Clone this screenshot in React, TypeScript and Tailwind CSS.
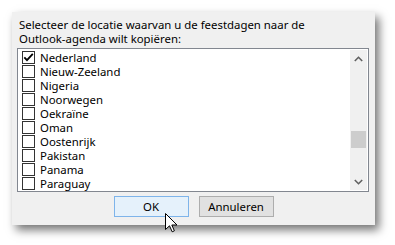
import React from "react"

const countries = [
  { name: "Nederland", checked: true },
  { name: "Nieuw-Zeeland" },
  { name: "Nigeria" },
  { name: "Noorwegen" },
  { name: "Oekraïne" },
  { name: "Oman" },
  { name: "Oostenrijk" },
  { name: "Pakistan" },
  { name: "Panama" },
  { name: "Paraguay" },
]

function CheckRow({ name, checked }: { name: string; checked?: boolean }) {
  return (
    <div className="flex h-[14px] items-center pl-[3px]">
      <div className="flex h-[13px] w-[13px] shrink-0 items-center justify-center border border-[#333333] bg-white">
        {checked && (
          <svg width="11" height="11" viewBox="0 0 11 11">
            <path d="M1.3 5.3 L4 8.2 L9.8 1.8" fill="none" stroke="#000" strokeWidth="1.8" />
          </svg>
        )}
      </div>
      <span className="ml-[5px] leading-[13px]">{name}</span>
    </div>
  )
}

function Scrollbar() {
  return (
    <div className="flex w-[17px] flex-col bg-[#f0f0f0]">
      <div className="flex h-[17px] items-center justify-center">
        <svg width="9" height="6" viewBox="0 0 9 6">
          <path d="M0.8 5 L4.5 1.3 L8.2 5" fill="none" stroke="#606060" strokeWidth="1.6" />
        </svg>
      </div>
      <div className="h-[64px]" />
      <div className="mx-px h-[17px] bg-[#cdcdcd]" />
      <div className="flex-1" />
      <div className="flex h-[17px] items-center justify-center">
        <svg width="9" height="6" viewBox="0 0 9 6">
          <path d="M0.8 1 L4.5 4.7 L8.2 1" fill="none" stroke="#606060" strokeWidth="1.6" />
        </svg>
      </div>
    </div>
  )
}

function Cursor() {
  return (
    <svg className="absolute left-[165px] top-[213px]" width="13" height="20" viewBox="0 0 13 20">
      <path
        d="M0.5 0.5 L0.5 16.5 L4.5 12.8 L7.2 18.8 L9.4 17.8 L6.8 12 L12 12 Z"
        fill="#fff"
        stroke="#000"
        strokeWidth="1"
        strokeLinejoin="round"
      />
    </svg>
  )
}

export default function App() {
  return (
    <div
      className="relative h-[245px] w-[395px] bg-white pl-[12px] pt-[12px] text-[11.4px] text-black"
      style={{ fontFamily: '"Noto Sans", sans-serif' }}
    >
      <div className="flex h-[213px] w-[363px] flex-col bg-[#f0f0f0] pt-[6px] shadow-[4px_5px_9px_rgba(0,0,0,0.55)]">
        <p className="pl-[7px] leading-[14px]">
          Selecteer de locatie waarvan u de feestdagen naar de
          <br />
          Outlook-agenda wilt kopiëren:
        </p>
        <div className="ml-[5px] mt-[2px] flex h-[144px] w-[352px] border border-[#828790] bg-white p-px">
          <div className="flex-1">
            {countries.map((c) => (
              <CheckRow key={c.name} name={c.name} checked={c.checked} />
            ))}
          </div>
          <Scrollbar />
        </div>
        <div className="mt-[4px] flex justify-center gap-[10px]">
          <button className="h-[21px] w-[75px] border border-[#7eb4ea] bg-[#e5f1fb] leading-[19px]">OK</button>
          <button className="h-[21px] w-[75px] border border-[#adadad] bg-[#e1e1e1] leading-[19px]">Annuleren</button>
        </div>
      </div>
      <Cursor />
    </div>
  )
}
